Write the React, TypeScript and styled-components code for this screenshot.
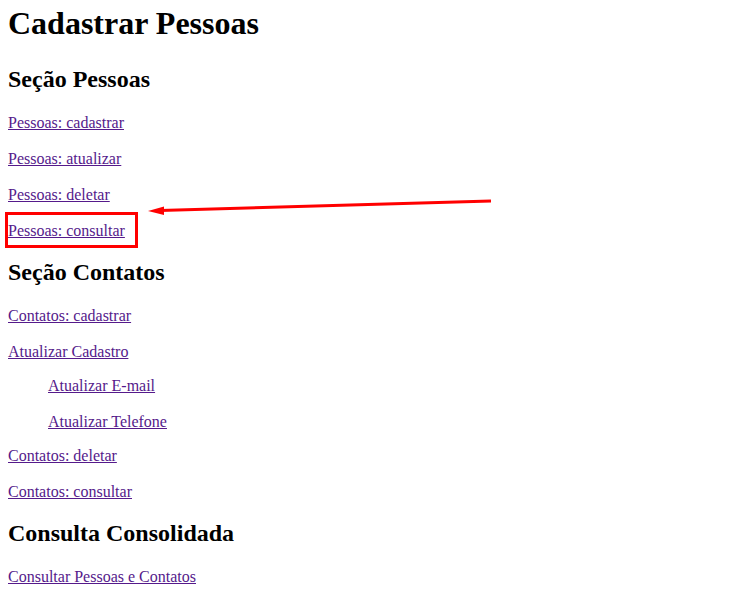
import React from "react";
import styled, { createGlobalStyle } from "styled-components";

const GlobalStyle = createGlobalStyle`
  html, body {
    margin: 0;
    padding: 0;
    background: #ffffff;
  }
  body {
    font-family: "Liberation Serif", "Times New Roman", serif;
    color: #000000;
  }
`;

const Page = styled.main`
  position: relative;
  width: 743px;
  min-height: 599px;
  padding: 5px 8px 0;
  box-sizing: border-box;
  overflow: hidden;
`;

const Title = styled.h1`
  font-size: 32px;
  font-weight: bold;
  margin: 0 0 24px;
`;

const Section = styled.section`
  display: block;
`;

const SectionTitle = styled.h2`
  font-size: 24px;
  font-weight: bold;
  margin: 18px 0 19.92px;
`;

const SubList = styled.div`
  margin: -2px 0 -2px 40px;
`;

const LinkRow = styled.p`
  font-size: 16px;
  line-height: 20px;
  margin: 16px 0;
`;

const NavLink = styled.a`
  color: #551a8b;
  text-decoration: underline;
`;

const Overlay = styled.svg`
  position: absolute;
  top: 0;
  left: 0;
  pointer-events: none;
`;

type Item = { label: string; children?: string[] };

const sections: { title: string; items: Item[] }[] = [
  {
    title: "Seção Pessoas",
    items: [
      { label: "Pessoas: cadastrar" },
      { label: "Pessoas: atualizar" },
      { label: "Pessoas: deletar" },
      { label: "Pessoas: consultar" },
    ],
  },
  {
    title: "Seção Contatos",
    items: [
      { label: "Contatos: cadastrar" },
      {
        label: "Atualizar Cadastro",
        children: ["Atualizar E-mail", "Atualizar Telefone"],
      },
      { label: "Contatos: deletar" },
      { label: "Contatos: consultar" },
    ],
  },
  {
    title: "Consulta Consolidada",
    items: [{ label: "Consultar Pessoas e Contatos" }],
  },
];

export default function App() {
  return (
    <>
      <GlobalStyle />
      <Page>
        <Title>Cadastrar Pessoas</Title>
        {sections.map((s) => (
          <Section key={s.title}>
            <SectionTitle>{s.title}</SectionTitle>
            {s.items.map((it) => (
              <React.Fragment key={it.label}>
                <LinkRow>
                  <NavLink href="#">{it.label}</NavLink>
                </LinkRow>
                {it.children && (
                  <SubList>
                    {it.children.map((c) => (
                      <LinkRow key={c}>
                        <NavLink href="#">{c}</NavLink>
                      </LinkRow>
                    ))}
                  </SubList>
                )}
              </React.Fragment>
            ))}
          </Section>
        ))}
        <Overlay width="743" height="599" viewBox="0 0 743 599">
          <rect x="6.5" y="213.5" width="130" height="33" fill="none" stroke="#ff0000" strokeWidth="3" />
          <line x1="491" y1="201" x2="160" y2="210.5" stroke="#ff0000" strokeWidth="3" />
          <polygon points="148,211 164,206.5 164,215" fill="#ff0000" />
        </Overlay>
      </Page>
    </>
  );
}
